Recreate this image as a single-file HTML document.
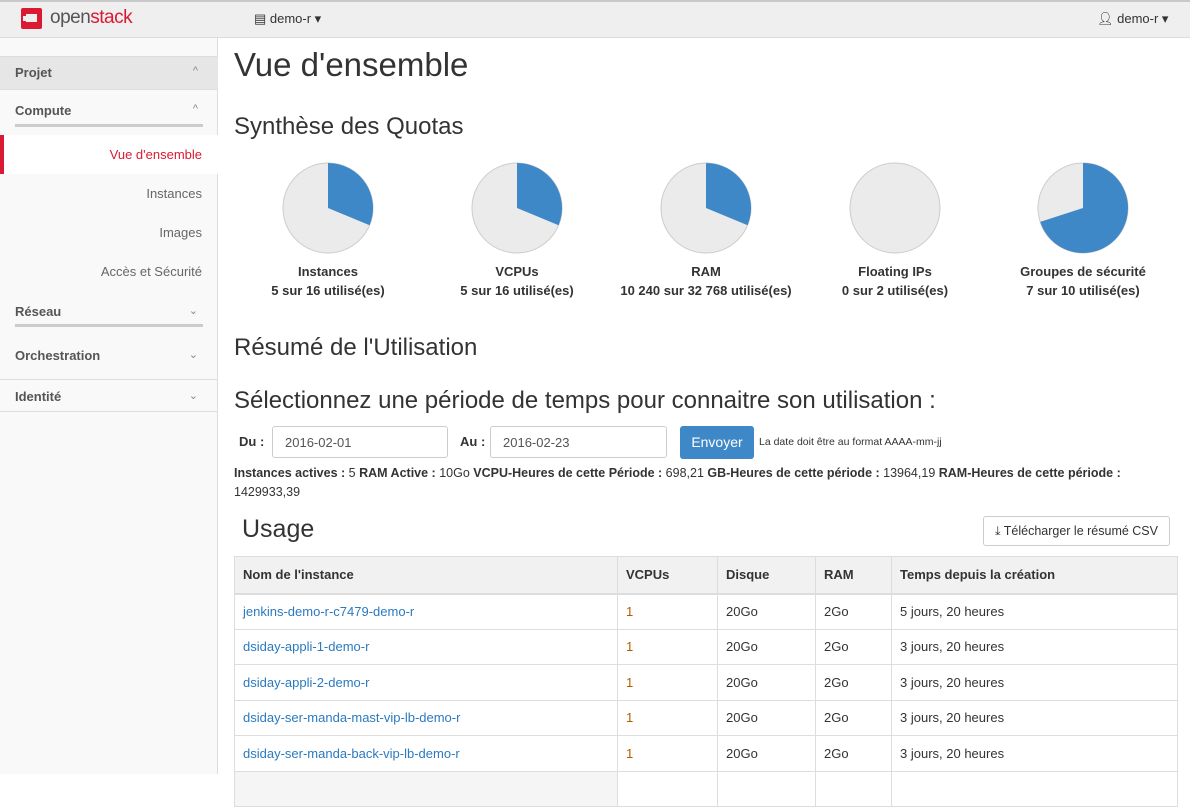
<!DOCTYPE html>
<html><head><meta charset="utf-8"><style>
*{box-sizing:border-box;margin:0;padding:0}
body{width:1190px;height:774px;overflow:hidden;font-family:"Liberation Sans",sans-serif;font-size:13px;color:#333;background:#fff;position:relative}
.top{position:absolute;left:0;top:0;width:1190px;height:38px;background:#efefef;border-top:2px solid #c9c9c9;border-bottom:1px solid #ddd}
.side{position:absolute;left:0;top:38px;width:218px;height:736px;background:#f9f9f9;border-right:1px solid #ddd}
.sec{position:absolute;left:0;width:218px;font-weight:bold;color:#555;font-size:13px;padding-left:15px}
.chev{position:absolute;right:20px;color:#888;font-size:11px;font-weight:normal}
.item{position:absolute;right:15px;color:#666;font-size:13px}
.main{position:absolute;left:234px}
h1{font-weight:normal;font-size:33px;color:#333}
h3{font-weight:normal;font-size:24px;color:#333}
.lbl{position:absolute;width:180px;text-align:center;font-weight:bold;font-size:13px;color:#333;line-height:19px}
input{position:absolute;height:32px;border:1px solid #ccc;border-radius:3px;padding-left:12px;font:13px "Liberation Sans",sans-serif;color:#555;background:#fff}
table{position:absolute;left:234px;top:556px;width:944px;border-collapse:collapse;font-size:13px}
th{background:#f1f1f1;text-align:left;font-weight:bold;height:37px;padding-left:8px;border:1px solid #ddd;border-bottom:2px solid #ddd}
td{height:35.5px;padding-left:8px;border:1px solid #ddd}
td a{color:#2a7ac0;text-decoration:none}
.o{color:#b35c00}
</style></head><body>
<div class="top">
 <svg style="position:absolute;left:20px;top:5px" width="24" height="24" viewBox="0 0 24 24"><rect x="1" y="1" width="21" height="21" rx="2" fill="#da1a32"/><rect x="6" y="7" width="11" height="8" fill="#efefef"/><rect x="3" y="9" width="3" height="5" fill="#efefef"/></svg>
 <div style="position:absolute;left:50px;top:5px;font-size:19px;color:#555;letter-spacing:-0.5px">open<span style="color:#da1a32">stack</span></div>
 <div style="position:absolute;left:254px;top:9px;font-size:13px;color:#333">▤ demo-r ▾</div>
 <div style="position:absolute;left:1097px;top:9px;font-size:13px;color:#333">👤︎ demo-r ▾</div>
</div>
<div class="side">
 <div style="position:absolute;top:18px;left:0;width:218px;height:34px;background:#e6e6e6;border-top:1px solid #ddd;border-bottom:1px solid #ddd"></div>
 <div class="sec" style="top:27px">Projet<span class="chev">^</span></div>
 <div class="sec" style="top:65px">Compute<span class="chev">^</span></div>
 <div style="position:absolute;left:15px;top:86px;width:188px;height:3px;background:#ccc"></div>
 <div style="position:absolute;left:0;top:97px;width:218px;height:39px;background:#fff;border-left:4px solid #da1a32"></div>
 <div class="item" style="top:109px;color:#da1a32">Vue d'ensemble</div>
 <div class="item" style="top:148px">Instances</div>
 <div class="item" style="top:187px">Images</div>
 <div class="item" style="top:226px">Accès et Sécurité</div>
 <div class="sec" style="top:266px">Réseau<span class="chev">⌄</span></div>
 <div style="position:absolute;left:15px;top:286px;width:188px;height:3px;background:#ccc"></div>
 <div class="sec" style="top:310px">Orchestration<span class="chev">⌄</span></div>
 <div style="position:absolute;left:0;top:341px;width:218px;height:1px;background:#ddd"></div>
 <div class="sec" style="top:351px">Identité<span class="chev">⌄</span></div>
 <div style="position:absolute;left:0;top:373px;width:218px;height:1px;background:#ddd"></div>
</div>
<h1 class="main" style="top:46px">Vue d'ensemble</h1>
<h3 class="main" style="top:113px">Synthèse des Quotas</h3>
<svg style="position:absolute;left:0;top:0" width="1190" height="260">
 <g fill="#ebebeb" stroke="#ccc" stroke-width="1">
 <circle cx="328" cy="208" r="45"/><circle cx="517" cy="208" r="45"/><circle cx="706" cy="208" r="45"/><circle cx="895" cy="208" r="45"/><circle cx="1083" cy="208" r="45"/></g>
 <g fill="#3f88c8">
 <path d="M328 208 L328 163 A45 45 0 0 1 369.6 225.2Z"/>
 <path d="M517 208 L517 163 A45 45 0 0 1 558.6 225.2Z"/>
 <path d="M706 208 L706 163 A45 45 0 0 1 747.6 225.2Z"/>
 <path d="M1083 208 L1083 163 A45 45 0 1 1 1040.2 221.9Z"/></g>
</svg>
<div class="lbl" style="left:238px;top:262px">Instances<br>5 sur 16 utilisé(es)</div>
<div class="lbl" style="left:427px;top:262px">VCPUs<br>5 sur 16 utilisé(es)</div>
<div class="lbl" style="left:596px;top:262px;width:220px">RAM<br>10 240 sur 32 768 utilisé(es)</div>
<div class="lbl" style="left:805px;top:262px">Floating IPs<br>0 sur 2 utilisé(es)</div>
<div class="lbl" style="left:993px;top:262px">Groupes de sécurité<br>7 sur 10 utilisé(es)</div>
<h3 class="main" style="top:334px">Résumé de l'Utilisation</h3>
<h3 class="main" style="top:387px">Sélectionnez une période de temps pour connaitre son utilisation :</h3>
<div style="position:absolute;left:239px;top:434px;font-weight:bold">Du :</div>
<input style="left:272px;top:426px;width:176px" value="2016-02-01">
<div style="position:absolute;left:460px;top:434px;font-weight:bold">Au :</div>
<input style="left:490px;top:426px;width:177px" value="2016-02-23">
<div style="position:absolute;left:680px;top:426px;width:74px;height:33px;background:#3f88c8;border-radius:3px;color:#fff;font-size:14px;line-height:33px;text-align:center">Envoyer</div>
<div style="position:absolute;left:759px;top:436px;font-size:10.5px">La date doit être au format AAAA-mm-jj</div>
<div style="position:absolute;left:234px;top:464px;width:950px;font-size:12.5px;line-height:19px"><b>Instances actives :</b> 5 <b>RAM Active :</b> 10Go <b>VCPU-Heures de cette Période :</b> 698,21 <b>GB-Heures de cette période :</b> 13964,19 <b>RAM-Heures de cette période :</b> 1429933,39</div>
<div style="position:absolute;left:242px;top:515px;font-size:25px">Usage</div>
<div style="position:absolute;left:983px;top:516px;width:187px;height:30px;border:1px solid #ccc;border-radius:3px;font-size:12.5px;line-height:28px;text-align:center">⤓ Télécharger le résumé CSV</div>
<table>
<tr><th style="width:383px">Nom de l'instance</th><th style="width:100px">VCPUs</th><th style="width:98px">Disque</th><th style="width:76px">RAM</th><th>Temps depuis la création</th></tr>
<tr><td><a>jenkins-demo-r-c7479-demo-r</a></td><td class="o">1</td><td>20Go</td><td>2Go</td><td>5 jours, 20 heures</td></tr>
<tr><td><a>dsiday-appli-1-demo-r</a></td><td class="o">1</td><td>20Go</td><td>2Go</td><td>3 jours, 20 heures</td></tr>
<tr><td><a>dsiday-appli-2-demo-r</a></td><td class="o">1</td><td>20Go</td><td>2Go</td><td>3 jours, 20 heures</td></tr>
<tr><td><a>dsiday-ser-manda-mast-vip-lb-demo-r</a></td><td class="o">1</td><td>20Go</td><td>2Go</td><td>3 jours, 20 heures</td></tr>
<tr><td><a>dsiday-ser-manda-back-vip-lb-demo-r</a></td><td class="o">1</td><td>20Go</td><td>2Go</td><td>3 jours, 20 heures</td></tr>
<tr><td style="background:#f5f5f5"></td><td></td><td></td><td></td><td></td></tr>
</table>
</body></html>
